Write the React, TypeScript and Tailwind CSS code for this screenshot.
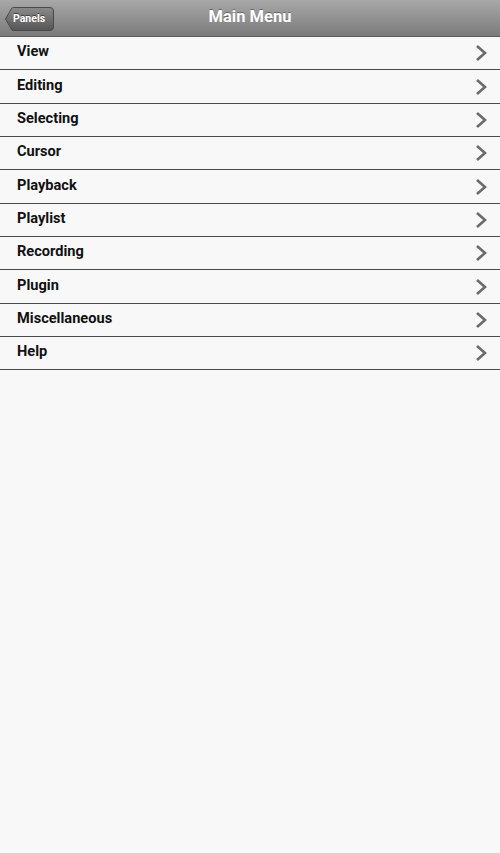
import React from "react";

const items = ["View","Editing","Selecting","Cursor","Playback","Playlist","Recording","Plugin","Miscellaneous","Help"];

function Chevron() {
  return (
    <svg width="14" height="18" viewBox="0 0 14 18" className="shrink-0">
      <path d="M3 2 L11 9 L3 16" fill="none" stroke="#6b6b6b" strokeWidth="2.6" strokeLinecap="butt" strokeLinejoin="miter" />
    </svg>
  );
}

export default function App() {
  return (
    <div className="w-[500px] h-[853px] bg-[#f8f8f8] overflow-hidden" style={{ fontFamily: "Roboto, 'Noto Sans', sans-serif" }}>
      <div className="relative h-[37px] flex items-center justify-center bg-gradient-to-b from-[#a8a8a8] to-[#7b7b7b] border-b border-[#5a5a5a]">
        <div className="absolute left-[5px] top-[7px] h-[24px] w-[49px]">
          <svg width="49" height="24" viewBox="0 0 49 24" className="absolute inset-0">
            <defs>
              <linearGradient id="bg" x1="0" y1="0" x2="0" y2="1">
                <stop offset="0" stopColor="#8a8a8a" />
                <stop offset="1" stopColor="#555555" />
              </linearGradient>
            </defs>
            <path d="M0.5 12 L7 0.8 Q7.6 0.5 8.5 0.5 L45 0.5 Q48.5 0.5 48.5 4 L48.5 20 Q48.5 23.5 45 23.5 L8.5 23.5 Q7.6 23.5 7 23.2 Z" fill="url(#bg)" stroke="#4a4a4a" strokeWidth="1" />
          </svg>
          <span className="absolute left-[8px] top-0 h-full flex items-center text-[10.5px] font-bold text-white [text-shadow:0_-1px_0_rgba(0,0,0,0.5)]">Panels</span>
        </div>
        <span className="text-white text-[16.5px] font-bold pb-[1px] [text-shadow:0_-1px_0_rgba(0,0,0,0.35)]">Main Menu</span>
      </div>
      <div className="flex flex-col">
        {items.map((it) => (
          <div key={it} className="h-[33.35px] flex items-center justify-between pl-[17px] pr-[12px] border-b border-[#4a4a4a]">
            <span className="text-[14.6px] font-bold text-[#111] pb-[2px]">{it}</span>
            <Chevron />
          </div>
        ))}
      </div>
    </div>
  );
}
